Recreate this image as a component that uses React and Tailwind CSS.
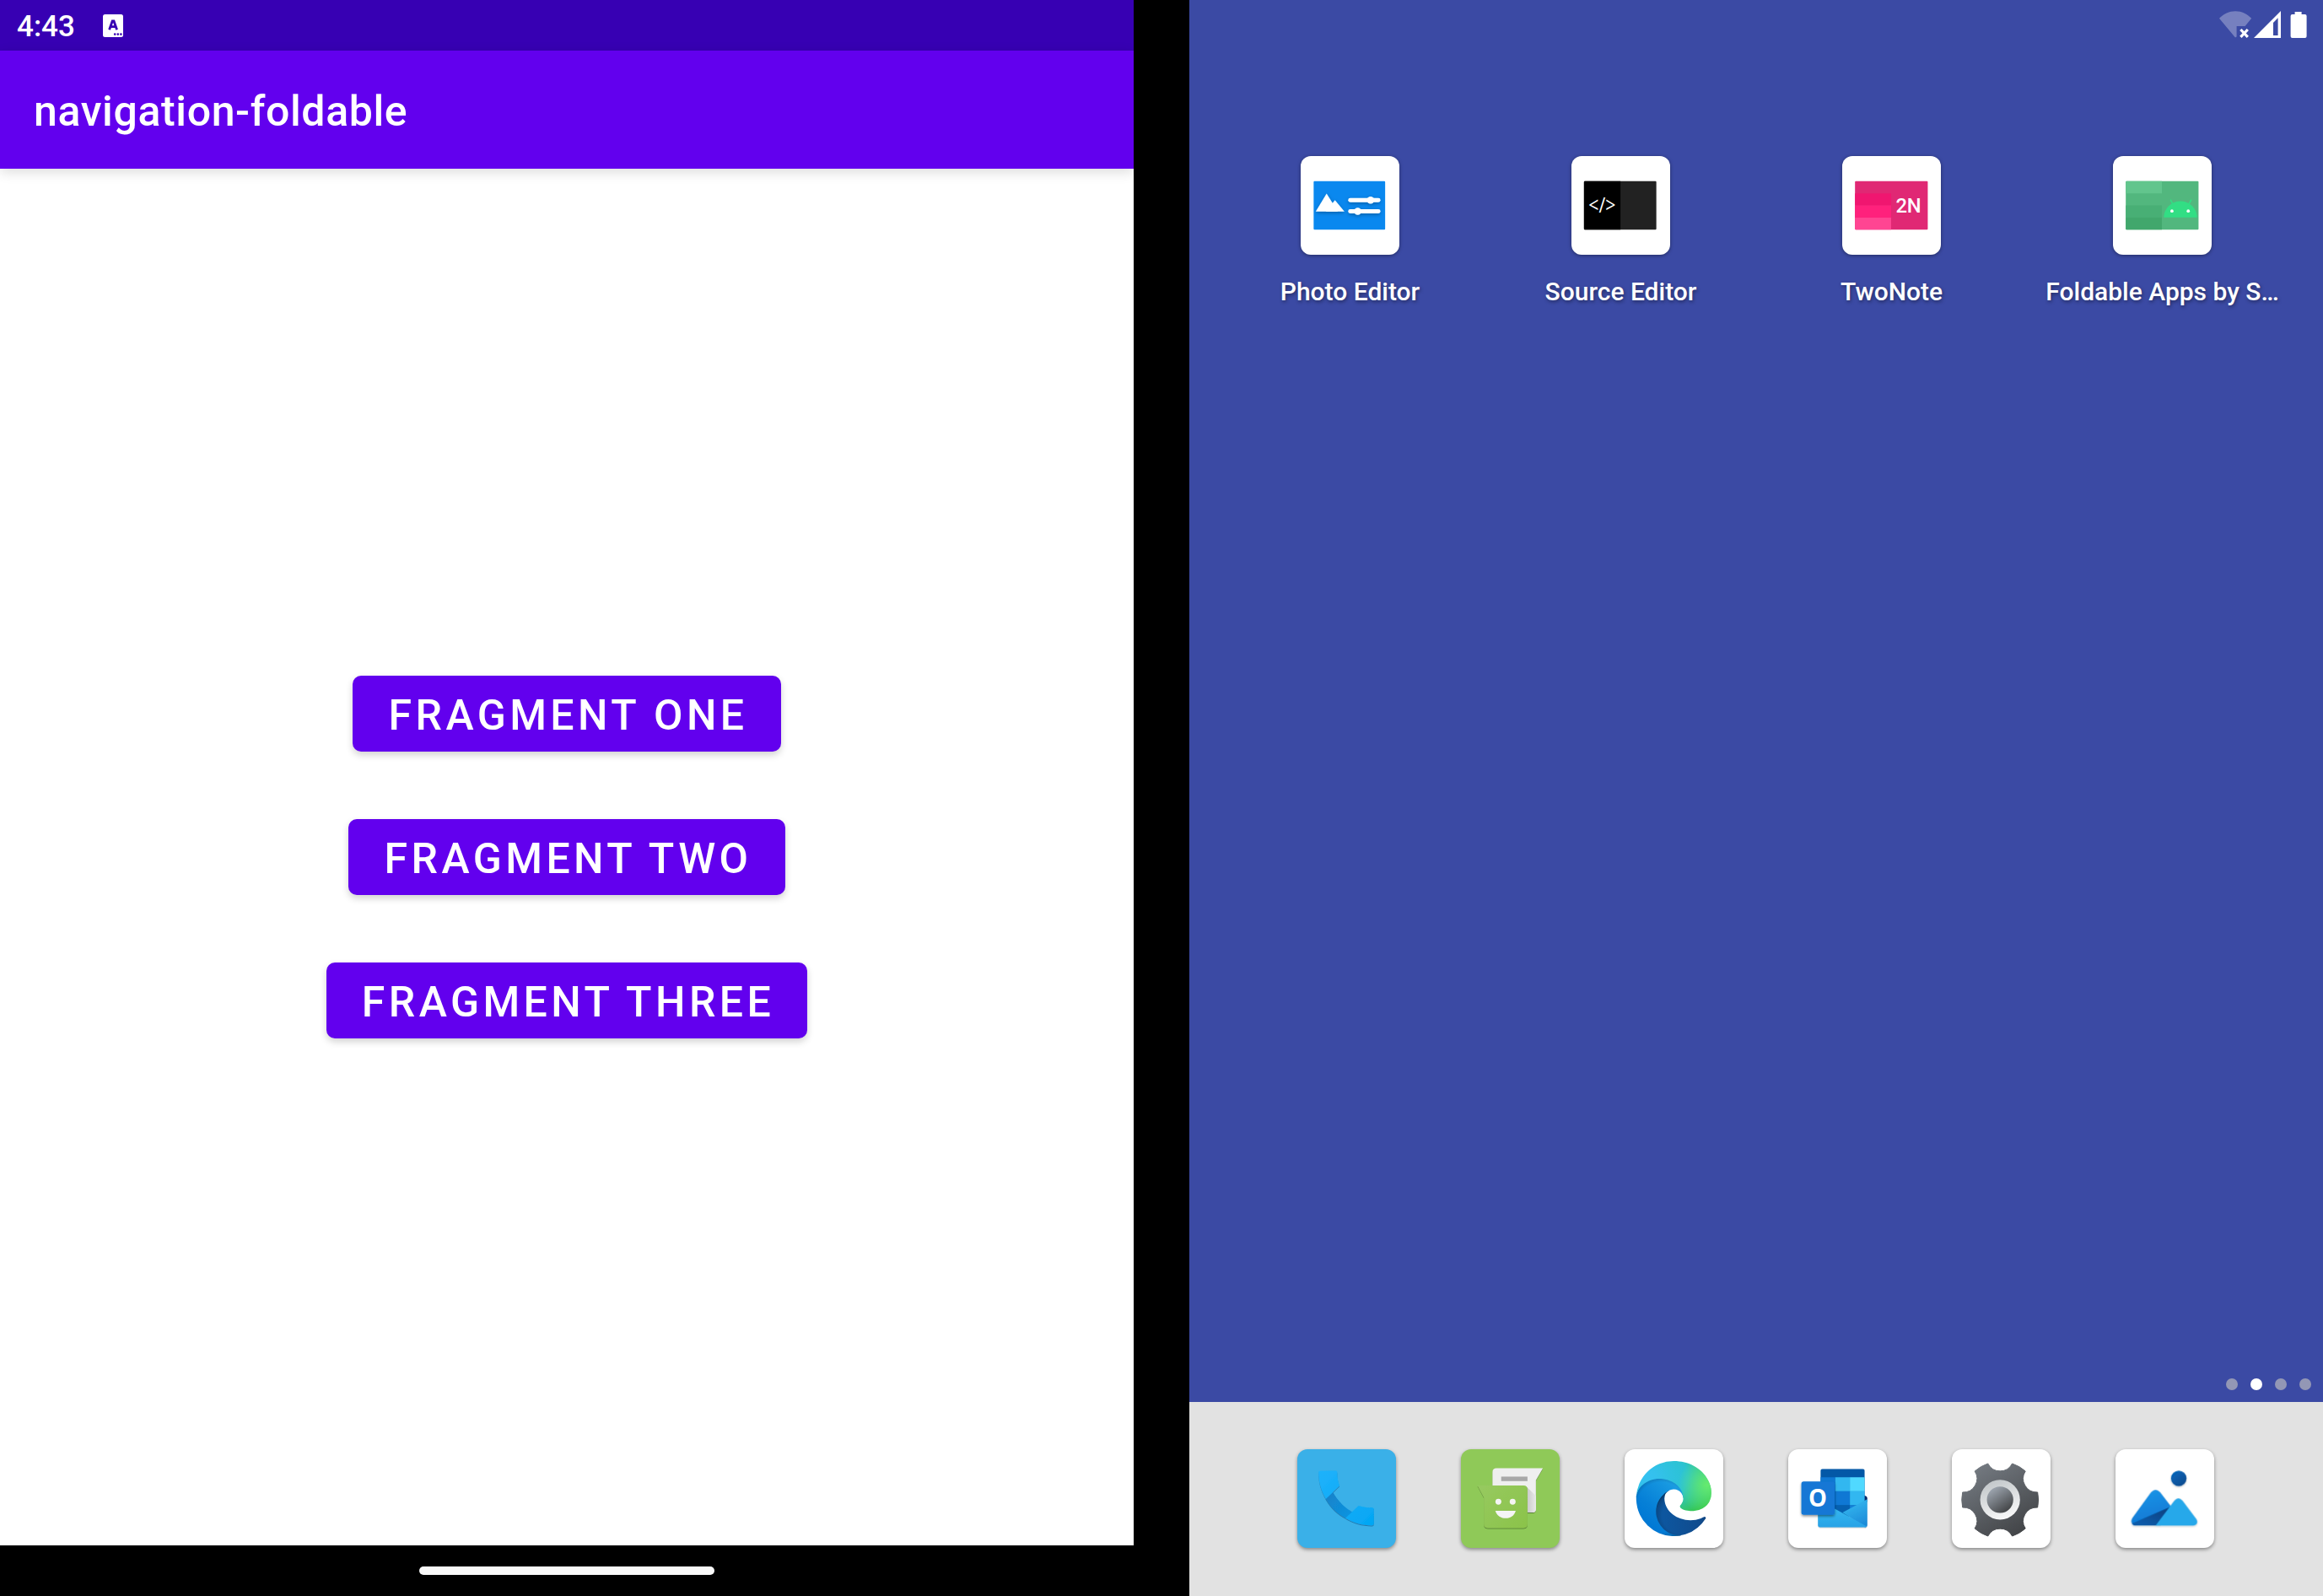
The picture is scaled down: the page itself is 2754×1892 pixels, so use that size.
const FONT = 'font-[Roboto,"Liberation_Sans",sans-serif]';

function KeyboardIcon() {
  return (
    <svg className="h-[27px] w-6" viewBox="0 0 24 27">
      <rect width="24" height="27" rx="2.5" fill="#fff" />
      <path d="M7.6 18.2 11.2 8h1.8l3.6 10.2M9.2 14.6h5.6" fill="none" stroke="#3700b3" strokeWidth="2.8" />
      <circle cx="14.2" cy="23.6" r="1.3" fill="#3700b3" />
      <circle cx="17.8" cy="23.6" r="1.3" fill="#3700b3" />
      <circle cx="21.4" cy="23.6" r="1.3" fill="#3700b3" />
    </svg>
  );
}

function StatusIcons() {
  return (
    <svg className="h-8 w-[104px]" viewBox="0 0 104 32">
      <path d="M0 8.8C5 3.6 12 .2 19.2.2s14 3.4 19 8.6L30.6 18H20.6v12.4L19 31.5Z" fill="#fff" fillOpacity=".3" />
      <path d="m25.4 22 8.4 8.8m0-8.8-8.4 8.8" stroke="#fff" strokeWidth="3.2" />
      <path d="M73 0v32H41ZM64 14v15h5.6V8.2Z" fill="#fff" fillRule="evenodd" />
      <path d="M89.6 1h8v3h4a2 2 0 0 1 2 2v24a2 2 0 0 1-2 2h-15a2 2 0 0 1-2-2V6a2 2 0 0 1 2-2h3Z" fill="#fff" />
    </svg>
  );
}

function PhotoEditorIcon() {
  return (
    <svg className="size-full" viewBox="0 0 118 118">
      <defs>
        <filter id="pe-shadow" x="-30%" y="-30%" width="160%" height="180%">
          <feDropShadow dx="0" dy="1.5" stdDeviation="2" floodOpacity=".3" />
        </filter>
      </defs>
      <rect x="15.5" y="30" width="85.5" height="58" rx="1" fill="#0a88ef" />
      <g fill="#fff" filter="url(#pe-shadow)">
        <path d="m41 52.8 11.3 13.4H30Z" />
        <path d="M31 45 44.5 66.2H18Z" />
        <rect x="56.8" y="50.2" width="38.6" height="5" rx="2.5" />
        <circle cx="83.6" cy="52.7" r="4.3" />
        <rect x="56.8" y="63.6" width="38.6" height="5" rx="2.5" />
        <circle cx="68.2" cy="66.1" r="4.3" />
      </g>
    </svg>
  );
}

function SourceEditorIcon() {
  return (
    <svg className="size-full" viewBox="0 0 118 118">
      <rect x="15" y="30" width="86.5" height="58" rx="1" fill="#222" />
      <path d="M16 30h42.6v58H16a1 1 0 0 1-1-1V31a1 1 0 0 1 1-1Z" fill="#000" />
      <text x="20.4" y="67.2" fill="#fff" fontSize="25" textLength="32.4" lengthAdjust="spacingAndGlyphs" className='font-["Open_Sans",sans-serif]'>{"</>"}</text>
    </svg>
  );
}

function TwoNoteIcon() {
  return (
    <svg className="size-full" viewBox="0 0 118 118">
      <rect x="15.3" y="30" width="87" height="58" rx="1" fill="#e02874" />
      <rect x="15.3" y="44.7" width="43.2" height="14.3" fill="#f01670" />
      <rect x="15.3" y="59" width="43.2" height="14.6" fill="#ff217c" />
      <path d="M15.3 73.6h43.2V88H16.3a1 1 0 0 1-1-1Z" fill="#ff4592" />
      <text x="64" y="67.3" fill="#fff" fontSize="24" textLength="30.5" className="font-[Roboto,sans-serif] font-medium">2N</text>
    </svg>
  );
}

function FoldableIcon() {
  return (
    <svg className="size-full" viewBox="0 0 118 118">
      <rect x="15.3" y="30" width="87" height="58" rx="1" fill="#52b77e" />
      <path d="M16.3 30h42.2v14.7H15.3V31a1 1 0 0 1 1-1Z" fill="#62c58d" />
      <rect x="15.3" y="59" width="43.2" height="14.6" fill="#48af75" />
      <path d="M15.3 73.6h43.2V88H16.3a1 1 0 0 1-1-1Z" fill="#41a76c" />
      <path d="M60.8 73.4a19.9 19.4 0 0 1 39.8 0Z" fill="#32de84" />
      <path d="m71.8 58-2.8-5.4M90.4 58l3-5.4" stroke="#32de84" strokeWidth="1.6" strokeLinecap="round" />
      <circle cx="70.5" cy="65.7" r="1.9" fill="#fff" />
      <circle cx="90" cy="65.7" r="1.9" fill="#fff" />
    </svg>
  );
}

function PhoneIcon() {
  return (
    <svg className="size-full" viewBox="53 53 353 353">
      <defs>
        <linearGradient id="ph-a" x1="130" y1="130" x2="326" y2="326" gradientUnits="userSpaceOnUse">
          <stop stopColor="#1fb2fb" />
          <stop offset="1" stopColor="#03a6f4" />
        </linearGradient>
        <linearGradient id="ph-b" x1="160" y1="210" x2="240" y2="290" gradientUnits="userSpaceOnUse">
          <stop stopColor="#1482c9" />
          <stop offset="1" stopColor="#0f93df" />
        </linearGradient>
        <filter id="ph-s" x="-20%" y="-20%" width="140%" height="140%">
          <feDropShadow dx="0" dy="3" stdDeviation="1.5" floodColor="#0b4a75" floodOpacity=".55" />
        </filter>
      </defs>
      <g filter="url(#ph-s)">
        <path d="m180 206-26 24c18 31 42 54 72 70l24-22c-30-17-52-41-70-72Z" fill="url(#ph-b)" />
        <path d="M136 130h54q6 0 6 6c0 18 3 34 8 48l-49 47c-17-29-26-61-26-94q0-7 7-7Z" fill="url(#ph-a)" />
        <path d="m225 300 47-45c16 5 30 7 48 7q7 0 7 7v50q0 7-7 7c-35 0-66-9-95-26Z" fill="url(#ph-a)" />
      </g>
    </svg>
  );
}

function MessagesIcon() {
  return (
    <svg className="size-full" viewBox="635 53 353 353">
      <defs>
        <linearGradient id="ms-a" x1="720" y1="185" x2="870" y2="335" gradientUnits="userSpaceOnUse">
          <stop stopColor="#96c95e" />
          <stop offset="1" stopColor="#8bc34a" />
        </linearGradient>
        <linearGradient id="ms-b" x1="860" y1="215" x2="905" y2="215" gradientUnits="userSpaceOnUse">
          <stop stopColor="#bdbdbd" />
          <stop offset="1" stopColor="#ececec" />
        </linearGradient>
        <filter id="ms-s" x="-20%" y="-20%" width="140%" height="140%">
          <feDropShadow dx="0" dy="3" stdDeviation="1.5" floodColor="#33501a" floodOpacity=".6" />
        </filter>
      </defs>
      <g filter="url(#ms-s)">
        <path d="M762 121h166l-25 43v103q0 12-12 12H762q-14 0-14-14V135q0-14 14-14Z" fill="#efefef" />
      </g>
      <path d="m868 186 35 34v47q0 12-12 12h-19Z" fill="url(#ms-b)" />
      <rect x="779" y="151" width="94" height="16" fill="#a8a8a8" />
      <g filter="url(#ms-s)">
        <path d="M694 183h165q14 0 14 14v124q0 14-14 14H731q-14 0-14-14v-95Z" fill="url(#ms-a)" />
      </g>
      <circle cx="769" cy="241" r="10.5" fill="#f5f5f5" />
      <circle cx="820" cy="241" r="10.5" fill="#f5f5f5" />
      <path d="M758 273h73c-5 17-18 27-36 27s-32-10-37-27Z" fill="#f5f5f5" />
    </svg>
  );
}

function EdgeIcon() {
  return (
    <svg className="size-full" viewBox="78 53 352 352">
      <defs>
        <linearGradient id="ed-a" x1="63.33" y1="182" x2="241.67" y2="182" gradientUnits="userSpaceOnUse">
          <stop stopColor="#0c59a4" />
          <stop offset="1" stopColor="#114a8b" />
        </linearGradient>
        <linearGradient id="ed-b" x1="157" y1="105" x2="46" y2="226" gradientUnits="userSpaceOnUse">
          <stop stopColor="#1b9de2" />
          <stop offset=".16" stopColor="#1595df" />
          <stop offset=".67" stopColor="#0680d7" />
          <stop offset="1" stopColor="#0078d4" />
        </linearGradient>
        <radialGradient id="ed-c" cx="0" cy="0" r="1" gradientUnits="userSpaceOnUse" gradientTransform="matrix(-8 220 -380 -14 30 54)">
          <stop stopColor="#35c1f1" />
          <stop offset=".11" stopColor="#34c1ed" />
          <stop offset=".25" stopColor="#2fc2df" />
          <stop offset=".4" stopColor="#2bc3d2" />
          <stop offset=".7" stopColor="#36c752" />
        </radialGradient>
        <radialGradient id="ed-d" cx="246" cy="86" r="98" gradientUnits="userSpaceOnUse">
          <stop stopColor="#66eb6e" />
          <stop offset="1" stopColor="#66eb6e" stopOpacity="0" />
        </radialGradient>
        <radialGradient id="ed-e" cx="162" cy="189" r="95" gradientTransform="matrix(1 0 0 .95 0 9.6)" gradientUnits="userSpaceOnUse">
          <stop offset=".72" stopOpacity="0" />
          <stop offset=".95" stopOpacity=".53" />
          <stop offset="1" />
        </radialGradient>
        <radialGradient id="ed-f" cx="90" cy="162" r="112" gradientUnits="userSpaceOnUse">
          <stop offset=".76" stopOpacity="0" />
          <stop offset=".95" stopOpacity=".5" />
          <stop offset="1" />
        </radialGradient>
      </defs>
      <g transform="translate(119.5 95) scale(1.047) translate(-4.63 -4.92)">
        <path d="M235.68 195.46a93.73 93.73 0 0 1-10.54 4.71 101.87 101.87 0 0 1-35.9 6.46c-47.32 0-88.54-32.55-88.54-74.32A31.48 31.48 0 0 1 117.13 105c-42.8 1.8-53.8 46.4-53.8 72.53 0 73.88 68.09 81.37 82.76 81.37 7.91 0 19.84-2.3 27-4.56l1.31-.44a128.34 128.34 0 0 0 66.6-52.8 4 4 0 0 0-5.32-5.64Z" fill="url(#ed-a)" />
        <path d="M235.68 195.46a93.73 93.73 0 0 1-10.54 4.71 101.87 101.87 0 0 1-35.9 6.46c-47.32 0-88.54-32.55-88.54-74.32A31.48 31.48 0 0 1 117.13 105c-42.8 1.8-53.8 46.4-53.8 72.53 0 73.88 68.09 81.37 82.76 81.37 7.91 0 19.84-2.3 27-4.56l1.31-.44a128.34 128.34 0 0 0 66.6-52.8 4 4 0 0 0-5.32-5.64Z" fill="url(#ed-e)" opacity=".35" />
        <path d="M110.34 246.34A79.2 79.2 0 0 1 87.6 225a80.72 80.72 0 0 1 29.53-120c3.12-1.47 8.45-4.13 15.54-4a32.35 32.35 0 0 1 25.69 13 31.88 31.88 0 0 1 6.36 18.66c0-.21 24.46-79.6-80-79.6-43.9 0-80 41.66-80 78.21a130.15 130.15 0 0 0 12.11 56 128 128 0 0 0 156.38 67.11 75.55 75.55 0 0 1-62.78-8Z" fill="url(#ed-b)" />
        <path d="M110.34 246.34A79.2 79.2 0 0 1 87.6 225a80.72 80.72 0 0 1 29.53-120c3.12-1.47 8.45-4.13 15.54-4a32.35 32.35 0 0 1 25.69 13 31.88 31.88 0 0 1 6.36 18.66c0-.21 24.46-79.6-80-79.6-43.9 0-80 41.66-80 78.21a130.15 130.15 0 0 0 12.11 56 128 128 0 0 0 156.38 67.11 75.55 75.55 0 0 1-62.78-8Z" fill="url(#ed-f)" opacity=".41" />
        <path d="M156.94 153.78c-.81 1.05-3.3 2.5-3.3 5.66 0 2.61 1.7 5.12 4.72 7.23 14.38 10 41.49 8.68 41.56 8.68a59.56 59.56 0 0 0 30.27-8.35A61.38 61.38 0 0 0 260.62 114c.26-22.41-8-37.31-11.34-43.91C228.09 28.76 182.35 5 132.61 5A128 128 0 0 0 4.63 131.2c.48-36.54 36.8-66.05 80-66.05 3.5 0 23.46.34 42 10.07 16.34 8.58 24.9 18.94 30.85 29.21 6.18 10.67 7.28 24.15 7.28 29.52s-2.74 13.33-7.82 19.83Z" fill="url(#ed-c)" />
        <path d="M156.94 153.78c-.81 1.05-3.3 2.5-3.3 5.66 0 2.61 1.7 5.12 4.72 7.23 14.38 10 41.49 8.68 41.56 8.68a59.56 59.56 0 0 0 30.27-8.35A61.38 61.38 0 0 0 260.62 114c.26-22.41-8-37.31-11.34-43.91C228.09 28.76 182.35 5 132.61 5A128 128 0 0 0 4.63 131.2c.48-36.54 36.8-66.05 80-66.05 3.5 0 23.46.34 42 10.07 16.34 8.58 24.9 18.94 30.85 29.21 6.18 10.67 7.28 24.15 7.28 29.52s-2.74 13.33-7.82 19.83Z" fill="url(#ed-d)" />
      </g>
    </svg>
  );
}

function OutlookIcon() {
  return (
    <svg className="size-full" viewBox="660 53 352 352">
      <defs>
        <clipPath id="ol-clip">
          <rect x="775" y="123" width="158" height="170" rx="8" />
        </clipPath>
        <linearGradient id="ol-a" x1="850" y1="260" x2="850" y2="332" gradientUnits="userSpaceOnUse">
          <stop stopColor="#35b8f1" />
          <stop offset="1" stopColor="#28a2e6" />
        </linearGradient>
        <linearGradient id="ol-b" x1="900" y1="235" x2="942" y2="330" gradientUnits="userSpaceOnUse">
          <stop stopColor="#33b5ee" />
          <stop offset="1" stopColor="#1a86d6" />
        </linearGradient>
        <filter id="ol-s" x="-30%" y="-30%" width="160%" height="160%">
          <feDropShadow dx="0" dy="5" stdDeviation="5" floodOpacity=".45" />
        </filter>
        <filter id="ol-t" x="-20%" y="-20%" width="140%" height="140%">
          <feDropShadow dx="0" dy="2" stdDeviation="2" floodOpacity=".3" />
        </filter>
      </defs>
      <path d="M930 218q12 2 12 10v12l-14 6Z" fill="#0a2767" />
      <g clipPath="url(#ol-clip)">
        <rect x="775" y="123" width="158" height="170" fill="#0358a7" />
        <rect x="775" y="153" width="53" height="50" fill="#0f78d4" />
        <rect x="828" y="153" width="52" height="50" fill="#32b7f0" />
        <rect x="880" y="153" width="53" height="50" fill="#50d9ff" />
        <rect x="775" y="203" width="53" height="50" fill="#0364b8" />
        <rect x="828" y="203" width="52" height="50" fill="#0f78d4" />
        <rect x="880" y="203" width="53" height="50" fill="#32b7f0" />
        <rect x="828" y="253" width="52" height="40" fill="#0560b0" />
        <rect x="880" y="253" width="53" height="40" fill="#1380d8" />
      </g>
      <g filter="url(#ol-t)">
        <path d="M942 231v92q0 8-8 8l-80-52Z" fill="url(#ol-b)" />
        <path d="M766 232v91q0 8 8 8h160q4 0 6-3Z" fill="url(#ol-a)" />
      </g>
      <rect x="707" y="168" width="119" height="119" rx="8" fill="#1277d5" filter="url(#ol-s)" />
      <text x="765.5" y="259" fill="#fff" fontSize="86" textAnchor="middle" textLength="66" lengthAdjust="spacingAndGlyphs" className='font-["Open_Sans",sans-serif] font-bold'>O</text>
    </svg>
  );
}

const polar = (r, deg) => {
  const a = (deg * Math.PI) / 180;
  return `${(244 + r * Math.cos(a)).toFixed(1)} ${(233.5 + r * Math.sin(a)).toFixed(1)}`;
};

const GEAR =
  `M${polar(136.5, -11.5)}` +
  [0, 60, 120, 180, 240, 300]
    .map((a) => `A136.5 136.5 0 0 1 ${polar(136.5, a + 11.5)}A48.5 48.5 0 0 0 ${polar(136.5, a + 48.5)}`)
    .join("") +
  "Z";

function SettingsIcon() {
  return (
    <svg className="size-full" viewBox="72 53 352 352">
      <defs>
        <linearGradient id="gr-a" x1="170" y1="110" x2="320" y2="360" gradientUnits="userSpaceOnUse">
          <stop stopColor="#737980" />
          <stop offset="1" stopColor="#414346" />
        </linearGradient>
        <linearGradient id="gr-b" x1="215" y1="165" x2="270" y2="303" gradientUnits="userSpaceOnUse">
          <stop stopColor="#c2c7ca" />
          <stop offset="1" stopColor="#fafafa" />
        </linearGradient>
        <linearGradient id="gr-c" x1="215" y1="195" x2="270" y2="275" gradientUnits="userSpaceOnUse">
          <stop stopColor="#9ca4ae" />
          <stop offset="1" stopColor="#424446" />
        </linearGradient>
      </defs>
      <path d={GEAR} fill="url(#gr-a)" stroke="url(#gr-a)" strokeWidth="3" strokeLinejoin="round" />
      <circle cx="244" cy="233" r="71" fill="url(#gr-b)" />
      <circle cx="244" cy="233" r="47" fill="url(#gr-c)" />
    </svg>
  );
}

function PhotosIcon() {
  return (
    <svg className="size-full" viewBox="654 53 352 352">
      <defs>
        <linearGradient id="pt-a" x1="760" y1="205" x2="790" y2="315" gradientUnits="userSpaceOnUse">
          <stop stopColor="#1b93e6" />
          <stop offset="1" stopColor="#0f78d4" />
        </linearGradient>
        <linearGradient id="pt-b" x1="800" y1="260" x2="770" y2="325" gradientUnits="userSpaceOnUse">
          <stop stopColor="#0b4586" />
          <stop offset="1" stopColor="#0a5aa8" />
        </linearGradient>
        <linearGradient id="pt-c" x1="860" y1="135" x2="900" y2="185" gradientUnits="userSpaceOnUse">
          <stop stopColor="#0565ba" />
          <stop offset="1" stopColor="#104a8c" />
        </linearGradient>
        <clipPath id="pt-clip">
          <path d="M781 206q16-16 32 0l50 66-48 53h-87c-16 0-22-16-13-28Z" />
        </clipPath>
        <filter id="pt-s" x="-20%" y="-20%" width="140%" height="140%">
          <feDropShadow dx="0" dy="3" stdDeviation="3" floodOpacity=".25" />
        </filter>
      </defs>
      <g filter="url(#pt-s)">
        <circle cx="879.5" cy="157" r="27.5" fill="url(#pt-c)" />
        <g clipPath="url(#pt-clip)">
          <rect x="700" y="190" width="170" height="140" fill="url(#pt-a)" />
          <path d="m712 318 138-60 20 70H712Z" fill="url(#pt-b)" />
        </g>
        <path d="m797 325 67-89q14-16 29 0l49 66c8 11 1 23-11 23Z" fill="#28a8ea" />
      </g>
    </svg>
  );
}

const apps = [
  { label: "Photo Editor", Icon: PhotoEditorIcon },
  { label: "Source Editor", Icon: SourceEditorIcon },
  { label: "TwoNote", Icon: TwoNoteIcon },
  { label: "Foldable Apps by S…", Icon: FoldableIcon },
];

const dock = [
  { name: "phone", bg: "bg-[#3ab0e8]", Icon: PhoneIcon },
  { name: "messages", bg: "bg-[#8fc958]", Icon: MessagesIcon },
  { name: "edge", bg: "bg-white", Icon: EdgeIcon },
  { name: "outlook", bg: "bg-white", Icon: OutlookIcon },
  { name: "settings", bg: "bg-white", Icon: SettingsIcon },
  { name: "photos", bg: "bg-white", Icon: PhotosIcon },
];

function FoldableApp() {
  return (
    <section className="flex h-full w-[1344px] flex-col bg-white">
      <div className="flex h-[60px] shrink-0 items-center gap-[33px] bg-[#3700b3] pl-5 text-white">
        <span className="pt-0.5 text-[35px] leading-none font-medium">4:43</span>
        <KeyboardIcon />
      </div>
      <header className="z-10 flex h-[140px] shrink-0 items-center bg-[#6200ee] pl-10 shadow-[0_4px_14px_rgba(0,0,0,0.14)]">
        <h1 className="pt-[3px] text-[50px] leading-none font-medium tracking-[0.0125em] text-white">navigation-foldable</h1>
      </header>
      <main className="flex flex-1 flex-col items-center justify-center gap-20 bg-white">
        {["Fragment One", "Fragment Two", "Fragment Three"].map((label) => (
          <button
            key={label}
            className="flex h-[90px] items-center rounded-[10px] bg-[#6200ee] pt-[3px] pr-[39px] pl-[42px] text-[50px] leading-none font-medium tracking-[0.0892857em] text-white uppercase shadow-[0_4px_8px_rgba(0,0,0,0.18)]"
          >
            {label}
          </button>
        ))}
      </main>
      <nav className="flex h-[60px] shrink-0 items-center justify-center bg-black">
        <div className="h-2.5 w-[350px] rounded-full bg-[#f9f9f9]" />
      </nav>
    </section>
  );
}

function Launcher() {
  return (
    <section className="flex h-full w-[1344px] flex-col bg-[#3b4aa4]">
      <div className="flex h-[60px] shrink-0 justify-end pt-[13px] pr-[19px]">
        <StatusIcons />
      </div>
      <div className="grid flex-1 grid-cols-4 content-start px-[30px] pt-[125px]">
        {apps.map(({ label, Icon }) => (
          <div key={label} className="flex flex-col items-center">
            <div className="size-[117px] rounded-xl bg-white shadow-[0_1px_4px_rgba(0,0,0,0.4)]">
              <Icon />
            </div>
            <span className="mt-[26px] text-[30px] leading-9 font-medium whitespace-nowrap text-white [text-shadow:1px_2px_4px_rgba(0,0,0,0.4)]">
              {label}
            </span>
          </div>
        ))}
      </div>
      <div className="flex justify-end gap-[15px] pr-3.5 pb-3.5">
        {[0, 1, 2, 3].map((i) => (
          <span key={i} className={i === 1 ? "size-3.5 rounded-full bg-white" : "size-3.5 rounded-full bg-[#9397b5]"} />
        ))}
      </div>
      <footer className="flex h-[230px] shrink-0 gap-[77px] bg-[#e2e2e2] pt-14 pl-32">
        {dock.map(({ name, bg, Icon }) => (
          <div key={name} className={`size-[117px] rounded-xl shadow-[0_2px_4px_rgba(0,0,0,0.4)] ${bg}`}>
            <Icon />
          </div>
        ))}
      </footer>
    </section>
  );
}

export default function App() {
  return (
    <div className={`flex h-[1892px] w-[2754px] justify-between overflow-hidden bg-black ${FONT}`}>
      <FoldableApp />
      <Launcher />
    </div>
  );
}
